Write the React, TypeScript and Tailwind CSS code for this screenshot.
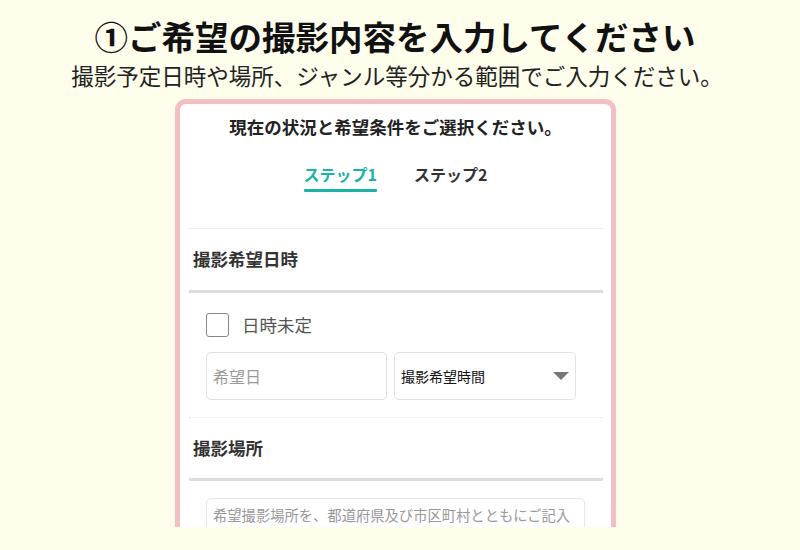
import React from "react";

const font = { fontFamily: '"Noto Sans CJK JP", "Noto Sans", sans-serif' };

export default function App() {
  return (
    <div className="w-[800px] h-[550px] bg-[#fffdec] overflow-hidden" style={font}>
      <div className="pt-[15px] pr-[10px] text-center">
        <h1 className="text-[33.5px] leading-[42px] font-bold text-[#111] whitespace-nowrap">
          ①ご希望の撮影内容を入力してください
        </h1>
        <p className="mt-[3px] pl-[4px] text-[22.5px] leading-[30px] text-[#222] whitespace-nowrap">
          撮影予定日時や場所、ジャンル等分かる範囲でご入力ください。
        </p>
      </div>
      <div className="mt-[9px] ml-[175px] w-[441px] h-[428px] overflow-hidden">
        <div className="bg-white border-[5px] border-[#f4bfc0] rounded-[11px] h-[600px]">
          <div className="h-[46px] flex items-center justify-center text-[17.5px] font-bold text-[#222] whitespace-nowrap">
            現在の状況と希望条件をご選択ください。
          </div>
          <div className="mt-[12px] flex justify-center gap-[37px]">
            <div className="flex flex-col">
              <span className="h-[24px] leading-[24px] text-[16px] font-bold text-[#1bb3a3]">ステップ1</span>
              <span className="mt-[3px] h-[3px] bg-[#1bb3a3] rounded-[1px]"></span>
            </div>
            <div className="flex flex-col">
              <span className="h-[24px] leading-[24px] text-[16px] font-bold text-[#333]">ステップ2</span>
              <span className="mt-[3px] h-[3px]"></span>
            </div>
          </div>
          <div className="pl-[9px] pr-[8px]">
            <div className="mt-[36px] h-px bg-[#eeeeee]"></div>
            <div className="h-[61px] flex items-center pl-[4px] text-[17.5px] font-bold text-[#333]">
              撮影希望日時
            </div>
            <div className="h-[3px] bg-[#dddddd]"></div>
            <div className="pl-[17px]">
              <div className="mt-[20px] h-[24px] flex items-center gap-[13px]">
                <span className="w-[23px] h-[24px] border-[1.5px] border-[#888] rounded-[3px] bg-white"></span>
                <span className="text-[17.5px] text-[#555]">日時未定</span>
              </div>
              <div className="mt-[15px] flex gap-[7px]">
                <div className="w-[181px] h-[48px] border border-[#e2e2e2] rounded-[5px] flex items-center pl-[6px] text-[16px] text-[#999]">
                  希望日
                </div>
                <div className="w-[182px] h-[48px] border border-[#e2e2e2] rounded-[5px] flex items-center justify-between pl-[6px] pr-[6px] text-[14px] text-[#111]">
                  <span>撮影希望時間</span>
                  <svg width="16" height="8" viewBox="0 0 16 8">
                    <path d="M0 0 L16 0 L8 8 Z" fill="#777" />
                  </svg>
                </div>
              </div>
            </div>
            <div className="mt-[17px] border-t border-dotted border-[#e6e6e6]"></div>
            <div className="h-[60px] flex items-center pl-[4px] text-[17.5px] font-bold text-[#333]">
              撮影場所
            </div>
            <div className="h-[3px] bg-[#dddddd]"></div>
            <div className="pl-[17px]">
              <div className="mt-[17px] w-[379px] h-[60px] border border-[#e8e8e8] rounded-[5px] pl-[6px] pt-[4px] text-[14.3px] leading-[24px] text-[#999] whitespace-nowrap overflow-hidden">
                希望撮影場所を、都道府県及び市区町村とともにご記入
              </div>
            </div>
          </div>
        </div>
      </div>
    </div>
  );
}
